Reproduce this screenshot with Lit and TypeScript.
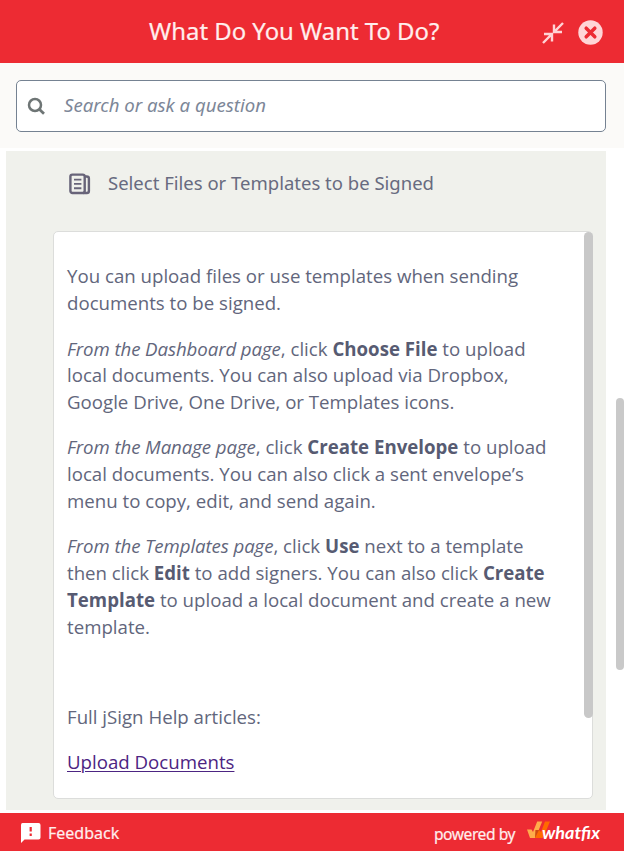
import { LitElement, html, css, svg } from "lit";
import { customElement } from "lit/decorators.js";

@customElement("app-root")
export class AppRoot extends LitElement {
  static styles = css`
    :host {
      display: flex;
      flex-direction: column;
      height: 851px;
      overflow: hidden;
      background: #fff;
      color: #62667c;
      font-family: "Open Sans", "Noto Sans", sans-serif;
      font-size: 18.67px;
      white-space: nowrap;
    }
    * { box-sizing: border-box; }
    svg { display: block; flex: none; }
    .header {
      height: 63px;
      flex: none;
      display: grid;
      grid-template-columns: 149px 1fr auto;
      align-items: center;
      padding-right: 21px;
      background: #ed2b33;
      color: #ffeeed;
    }
    .title {
      grid-column: 2;
      margin: 0;
      padding-bottom: 2px;
      font: 400 23.9px/34px "Noto Sans", sans-serif;
      -webkit-text-stroke: 0.2px #ffeeed;
    }
    .actions { display: flex; align-items: center; gap: 14px; padding-top: 2px; }
    .search {
      height: 85px;
      flex: none;
      padding: 17px 18px 16px 16px;
      background: #fbfaf8;
    }
    .field {
      height: 52px;
      display: flex;
      align-items: center;
      gap: 18px;
      padding-left: 10px;
      border: 1px solid #758292;
      border-radius: 5px;
      background: #fff;
      color: #7d8798;
      font: italic 18.6px/26px "Noto Sans", sans-serif;
    }
    .field span { padding-bottom: 2px; }
    .main { flex: 1; min-height: 0; display: flex; justify-content: space-between; padding: 3px 0 3px 6px; }
    .panel { width: 600px; padding: 19px 13px 0 47px; background: #f0f1ec; }
    .topic {
      display: flex;
      align-items: center;
      gap: 17px;
      height: 28px;
      padding-left: 15px;
      font: 400 18.5px/26px "Noto Sans", sans-serif;
      color: #686b80;
    }
    .topic span { padding-bottom: 2px; }
    .card {
      display: flex;
      justify-content: space-between;
      width: 540px;
      height: 568px;
      margin-top: 33px;
      border: 1px solid #dcdddb;
      border-radius: 5px;
      background: #fff;
    }
    .article { padding: 31px 0 0 13px; line-height: 26.8px; }
    p { margin: 0 0 18.5px; }
    p:first-child { margin-bottom: 19px; }
    i { letter-spacing: -0.09px; }
    .spacer { height: 26.5px; }
    b { font-weight: 700; color: #575b72; }
    .link { color: #4c2482; text-decoration: underline; text-decoration-thickness: 1px; text-underline-offset: 2px; }
    .thumb { width: 9px; height: 486px; border-radius: 5px; background: #c8c8c8; flex: none; margin-right: -1px; }
    .outer { width: 8px; height: 272px; margin-top: 247px; border-radius: 4px; background: #c9c9c9; }
    .footer {
      height: 38px;
      flex: none;
      display: flex;
      align-items: center;
      justify-content: space-between;
      padding: 2px 22px 0 20px;
      background: #ed2b33;
      color: #ffeeed;
      font: 400 16px/24px "Noto Sans", sans-serif;
      -webkit-text-stroke: 0.2px #ffeeed;
    }
    .feedback, .brand { display: flex; align-items: center; gap: 7px; }
    .brand { gap: 12px; }
    .powered { font-size: 15.6px; letter-spacing: -0.45px; padding-top: 2px; }
    .wordmark { font: italic 700 17px "Lato", sans-serif; -webkit-text-stroke: 0; }
  `;

  private collapseIcon = svg`<svg width="22" height="22" viewBox="0 0 22 22" fill="none" stroke="#ffd3d5" stroke-width="2.4">
    <path d="M21 1 L12.2 9.8 M12 2.6 V10 H20 M1 21 L9.8 12.2 M2 12 H10 V19.5"/></svg>`;

  private closeIcon = svg`<svg width="25" height="25" viewBox="0 0 25 25">
    <circle cx="12.5" cy="12.5" r="12.2" fill="#ffd5d7"/>
    <path d="M8.2 8.2 L16.8 16.8 M16.8 8.2 L8.2 16.8" stroke="#ed2b33" stroke-width="3.5" stroke-linecap="round"/></svg>`;

  private searchIcon = svg`<svg width="19" height="18" viewBox="0 0 19 18" fill="none" stroke="#6e7575">
    <circle cx="8" cy="8" r="6" stroke-width="2.5"/><path d="M12.3 12.3 L17 16.7" stroke-width="2.8"/></svg>`;

  private articleIcon = svg`<svg width="23" height="22" viewBox="0 0 23 22" fill="none" stroke="#686479" stroke-width="2.4">
    <rect x="2.4" y="1.6" width="14.3" height="18.4" rx="2"/>
    <path d="M16.5 3.5 H18.7 Q20.9 3.5 20.9 5.5 V18 Q20.9 20 18.9 20 H15"/>
    <path d="M6 6.6 H13.4 M6 10.9 H13.4 M6 15.2 H13.4" stroke-width="1.9"/></svg>`;

  private feedbackIcon = svg`<svg width="21" height="20" viewBox="0 0 21 20">
    <path d="M2.5 0 H18.5 Q20.5 0 20.5 2 V14.5 Q20.5 16.5 18.5 16.5 H4.5 L1 20 V2 Q1 0 2.5 0Z" fill="#fff"/>
    <path d="M10.7 4 V8.5 M10.7 10.5 V13" stroke="#ed2b33" stroke-width="2.2"/></svg>`;

  private whatfixLogo = svg`<svg width="75" height="26" viewBox="0 0 75 26">
    <path d="M0 9.5 H4.5 L6 12 L10.2 1.5 H15.2 L8.5 18 H3Z" fill="#ffac4b"/>
    <path d="M8.4 10 H12.5 V16 L8 18Z" fill="#cf4a10"/>
    <path d="M18 1.5 H23 L16 18 H8 L12 10 L14 12Z" fill="#ff6a00"/>
    <text class="wordmark" x="15" y="19" textLength="58" lengthAdjust="spacingAndGlyphs" fill="#fff">whatfix</text></svg>`;

  render() {
    return html`
      <header class="header">
        <h1 class="title">What Do You Want To Do?</h1>
        <div class="actions">${this.collapseIcon}${this.closeIcon}</div>
      </header>
      <div class="search"><div class="field">${this.searchIcon}<span>Search or ask a question</span></div></div>
      <main class="main">
        <section class="panel">
          <div class="topic">${this.articleIcon}<span>Select Files or Templates to be Signed</span></div>
          <div class="card">
            <div class="article">
              <p>You can upload files or use templates when sending<br>documents to be signed.</p>
              <p><i>From the Dashboard page</i>, click <b>Choose File</b> to upload<br>local documents. You can also upload via Dropbox,<br>Google Drive, One Drive, or Templates icons.</p>
              <p><i>From the Manage page</i>, click <b>Create Envelope</b> to upload<br>local documents. You can also click a sent envelope’s<br>menu to copy, edit, and send again.</p>
              <p><i>From the Templates page</i>, click <b>Use</b> next to a template<br>then click <b>Edit</b> to add signers. You can also click <b>Create<br>Template</b> to upload a local document and create a new<br>template.</p>
              <p class="spacer"></p>
              <p>Full jSign Help articles:</p>
              <p><a class="link">Upload Documents</a></p>
            </div>
            <div class="thumb"></div>
          </div>
        </section>
        <div class="outer"></div>
      </main>
      <footer class="footer">
        <div class="feedback">${this.feedbackIcon}<span>Feedback</span></div>
        <div class="brand"><span class="powered">powered by</span>${this.whatfixLogo}</div>
      </footer>
    `;
  }
}
